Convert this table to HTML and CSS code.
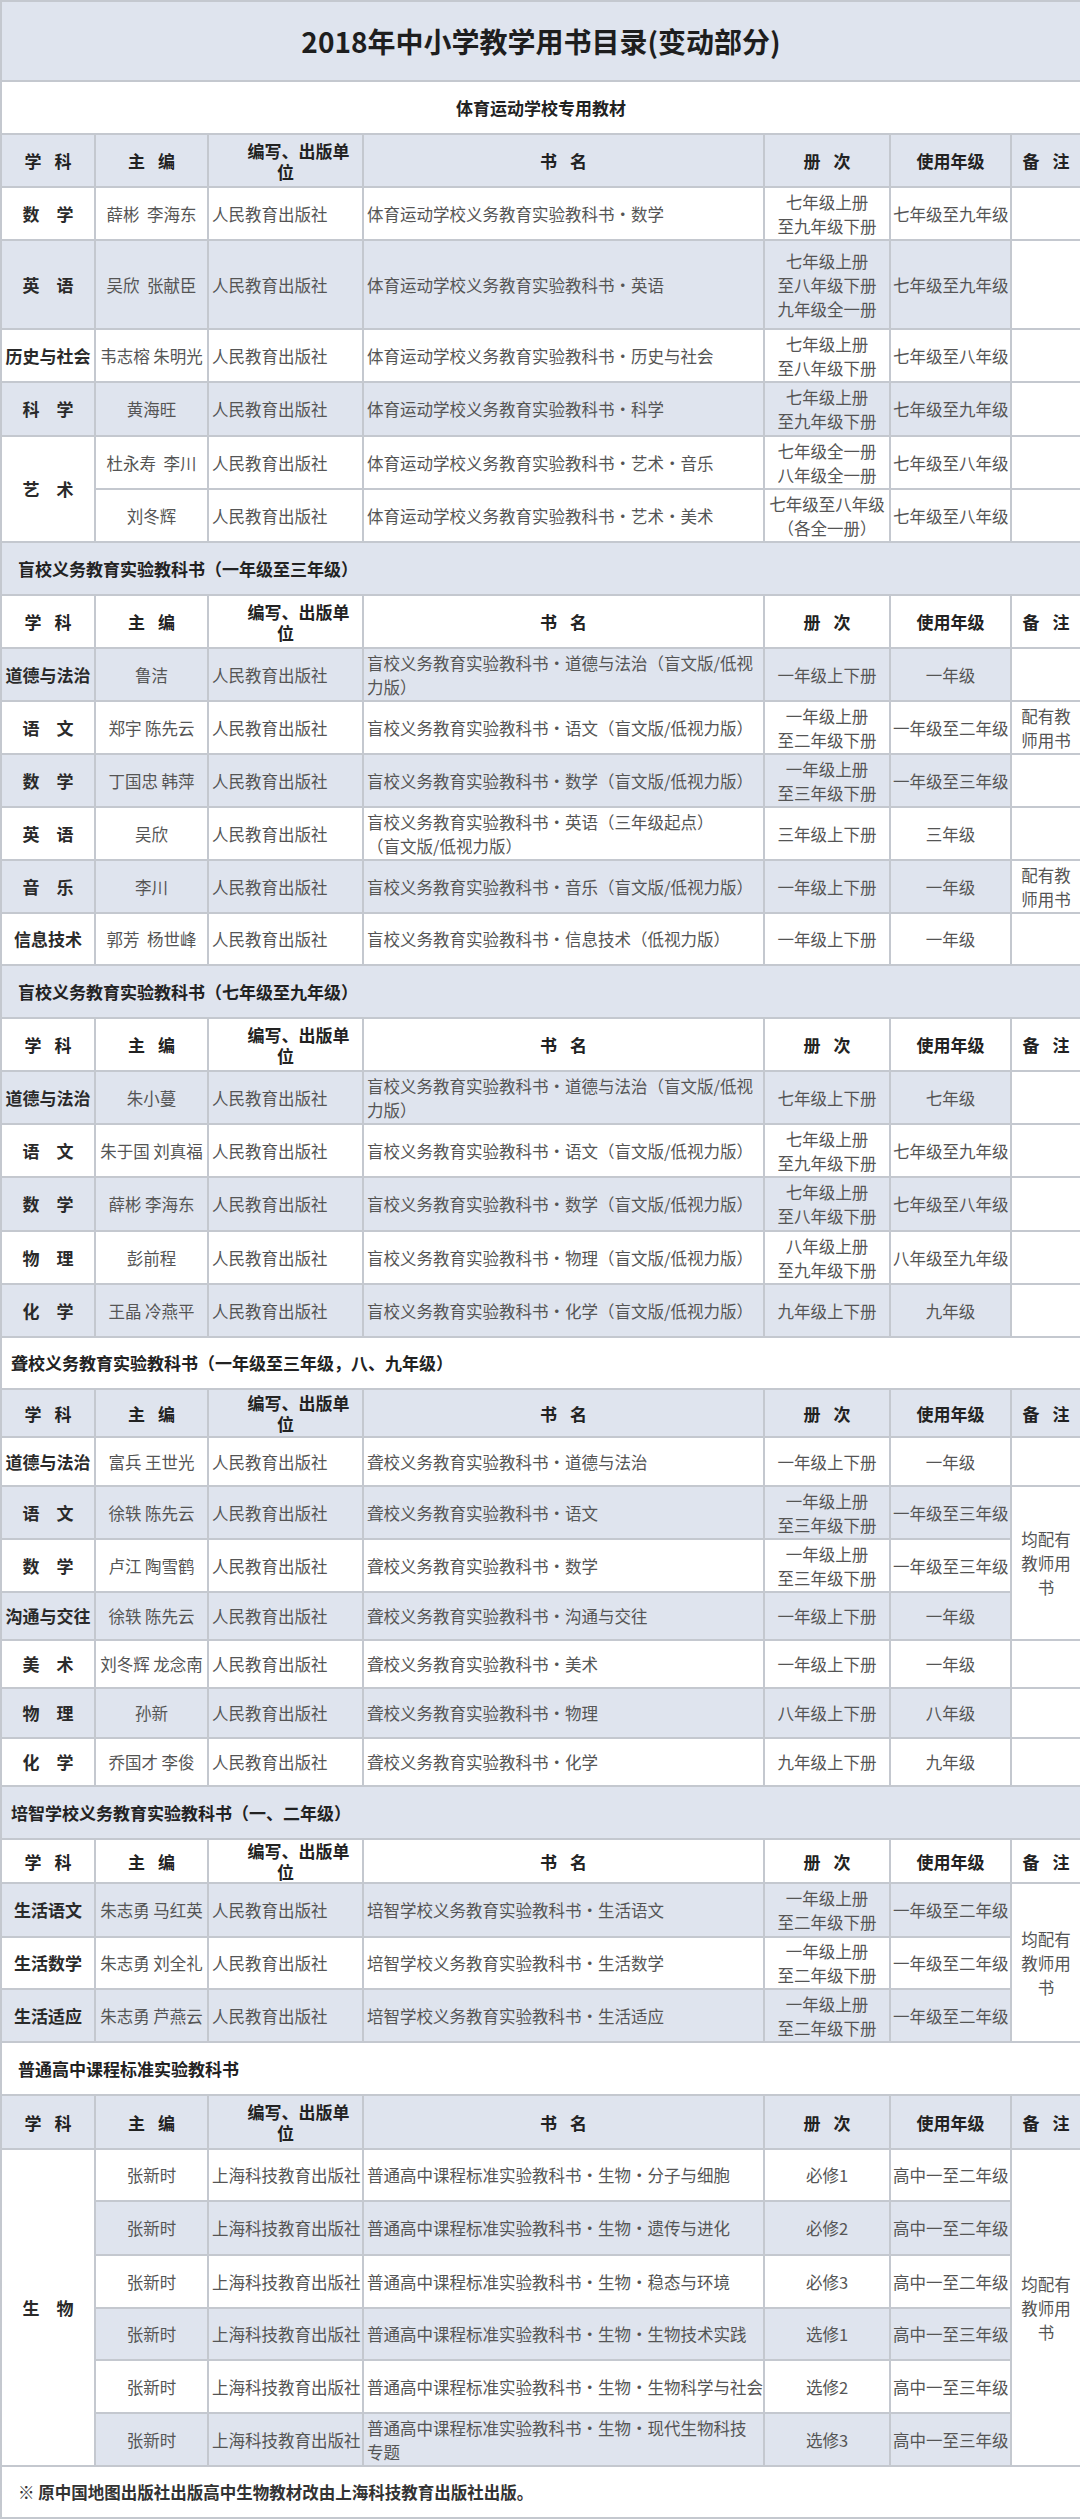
FILE: index.html
```html
<!DOCTYPE html>
<html lang="zh-CN">
<head>
<meta charset="utf-8">
<title>2018年中小学教学用书目录(变动部分)</title>
<link rel="stylesheet" href="styles.css">
</head>
<body>
<table class="book-table">
  <colgroup>
    <col class="c-subj"><col class="c-editor"><col class="c-pub"><col class="c-name"><col class="c-vol"><col class="c-grade"><col class="c-note">
  </colgroup>
  <tbody>
    <tr class="title-row"><td colspan="7" class="doc-title">2018年中小学教学用书目录(变动部分)</td></tr>

    <!-- Section 1 -->
    <tr class="sec"><td colspan="7" class="sec-title center">体育运动学校专用教材</td></tr>
    <tr class="hd gray"><td>学 科</td><td>主 编</td><td><span class="unit-l1">编写、出版单</span><br>位</td><td>书 名</td><td>册 次</td><td>使用年级</td><td>备 注</td></tr>
    <tr><td class="subj">数　学</td><td class="ed">薛彬&nbsp; 李海东</td><td class="pub">人民教育出版社</td><td class="nm">体育运动学校义务教育实验教科书・数学</td><td class="vol">七年级上册<br>至九年级下册</td><td class="gr">七年级至九年级</td><td class="note"></td></tr>
    <tr class="gray h89"><td class="subj">英　语</td><td class="ed">吴欣&nbsp; 张献臣</td><td class="pub">人民教育出版社</td><td class="nm">体育运动学校义务教育实验教科书・英语</td><td class="vol">七年级上册<br>至八年级下册<br>九年级全一册</td><td class="gr">七年级至九年级</td><td class="note"></td></tr>
    <tr><td class="subj">历史与社会</td><td class="ed">韦志榕 朱明光</td><td class="pub">人民教育出版社</td><td class="nm">体育运动学校义务教育实验教科书・历史与社会</td><td class="vol">七年级上册<br>至八年级下册</td><td class="gr">七年级至八年级</td><td class="note"></td></tr>
    <tr class="gray h54"><td class="subj">科　学</td><td class="ed">黄海旺</td><td class="pub">人民教育出版社</td><td class="nm">体育运动学校义务教育实验教科书・科学</td><td class="vol">七年级上册<br>至九年级下册</td><td class="gr">七年级至九年级</td><td class="note"></td></tr>
    <tr><td class="subj" rowspan="2">艺　术</td><td class="ed">杜永寿&nbsp; 李川</td><td class="pub">人民教育出版社</td><td class="nm">体育运动学校义务教育实验教科书・艺术・音乐</td><td class="vol">七年级全一册<br>八年级全一册</td><td class="gr">七年级至八年级</td><td class="note"></td></tr>
    <tr><td class="ed">刘冬辉</td><td class="pub">人民教育出版社</td><td class="nm">体育运动学校义务教育实验教科书・艺术・美术</td><td class="vol">七年级至八年级<br>（各全一册）</td><td class="gr">七年级至八年级</td><td class="note"></td></tr>

    <!-- Section 2 -->
    <tr class="sec gray"><td colspan="7" class="sec-title">盲校义务教育实验教科书（一年级至三年级）</td></tr>
    <tr class="hd"><td>学 科</td><td>主 编</td><td><span class="unit-l1">编写、出版单</span><br>位</td><td>书 名</td><td>册 次</td><td>使用年级</td><td>备 注</td></tr>
    <tr class="gray"><td class="subj">道德与法治</td><td class="ed">鲁洁</td><td class="pub">人民教育出版社</td><td class="nm">盲校义务教育实验教科书・道德与法治（盲文版/低视<br>力版）</td><td class="vol">一年级上下册</td><td class="gr">一年级</td><td class="note"></td></tr>
    <tr><td class="subj">语　文</td><td class="ed">郑宇 陈先云</td><td class="pub">人民教育出版社</td><td class="nm">盲校义务教育实验教科书・语文（盲文版/低视力版）</td><td class="vol">一年级上册<br>至二年级下册</td><td class="gr">一年级至二年级</td><td class="note">配有教师用书</td></tr>
    <tr class="gray"><td class="subj">数　学</td><td class="ed">丁国忠 韩萍</td><td class="pub">人民教育出版社</td><td class="nm">盲校义务教育实验教科书・数学（盲文版/低视力版）</td><td class="vol">一年级上册<br>至三年级下册</td><td class="gr">一年级至三年级</td><td class="note"></td></tr>
    <tr><td class="subj">英　语</td><td class="ed">吴欣</td><td class="pub">人民教育出版社</td><td class="nm">盲校义务教育实验教科书・英语（三年级起点）<br>（盲文版/低视力版）</td><td class="vol">三年级上下册</td><td class="gr">三年级</td><td class="note"></td></tr>
    <tr class="gray"><td class="subj">音　乐</td><td class="ed">李川</td><td class="pub">人民教育出版社</td><td class="nm">盲校义务教育实验教科书・音乐（盲文版/低视力版）</td><td class="vol">一年级上下册</td><td class="gr">一年级</td><td class="note">配有教师用书</td></tr>
    <tr class="h52"><td class="subj">信息技术</td><td class="ed">郭芳&nbsp; 杨世峰</td><td class="pub">人民教育出版社</td><td class="nm">盲校义务教育实验教科书・信息技术（低视力版）</td><td class="vol">一年级上下册</td><td class="gr">一年级</td><td class="note"></td></tr>

    <!-- Section 3 -->
    <tr class="sec gray"><td colspan="7" class="sec-title">盲校义务教育实验教科书（七年级至九年级）</td></tr>
    <tr class="hd"><td>学 科</td><td>主 编</td><td><span class="unit-l1">编写、出版单</span><br>位</td><td>书 名</td><td>册 次</td><td>使用年级</td><td>备 注</td></tr>
    <tr class="gray"><td class="subj">道德与法治</td><td class="ed">朱小蔓</td><td class="pub">人民教育出版社</td><td class="nm">盲校义务教育实验教科书・道德与法治（盲文版/低视<br>力版）</td><td class="vol">七年级上下册</td><td class="gr">七年级</td><td class="note"></td></tr>
    <tr><td class="subj">语　文</td><td class="ed">朱于国 刘真福</td><td class="pub">人民教育出版社</td><td class="nm">盲校义务教育实验教科书・语文（盲文版/低视力版）</td><td class="vol">七年级上册<br>至九年级下册</td><td class="gr">七年级至九年级</td><td class="note"></td></tr>
    <tr class="gray h54"><td class="subj">数　学</td><td class="ed">薛彬 李海东</td><td class="pub">人民教育出版社</td><td class="nm">盲校义务教育实验教科书・数学（盲文版/低视力版）</td><td class="vol">七年级上册<br>至八年级下册</td><td class="gr">七年级至八年级</td><td class="note"></td></tr>
    <tr><td class="subj">物　理</td><td class="ed">彭前程</td><td class="pub">人民教育出版社</td><td class="nm">盲校义务教育实验教科书・物理（盲文版/低视力版）</td><td class="vol">八年级上册<br>至九年级下册</td><td class="gr">八年级至九年级</td><td class="note"></td></tr>
    <tr class="gray"><td class="subj">化　学</td><td class="ed">王晶 冷燕平</td><td class="pub">人民教育出版社</td><td class="nm">盲校义务教育实验教科书・化学（盲文版/低视力版）</td><td class="vol">九年级上下册</td><td class="gr">九年级</td><td class="note"></td></tr>

    <!-- Section 4 -->
    <tr class="sec h52"><td colspan="7" class="sec-title tight">聋校义务教育实验教科书（一年级至三年级，八、九年级）</td></tr>
    <tr class="hd gray h48"><td>学 科</td><td>主 编</td><td><span class="unit-l1">编写、出版单</span><br>位</td><td>书 名</td><td>册 次</td><td>使用年级</td><td>备 注</td></tr>
    <tr class="h49"><td class="subj">道德与法治</td><td class="ed">富兵 王世光</td><td class="pub">人民教育出版社</td><td class="nm">聋校义务教育实验教科书・道德与法治</td><td class="vol">一年级上下册</td><td class="gr">一年级</td><td class="note"></td></tr>
    <tr class="gray"><td class="subj">语　文</td><td class="ed">徐轶 陈先云</td><td class="pub">人民教育出版社</td><td class="nm">聋校义务教育实验教科书・语文</td><td class="vol">一年级上册<br>至三年级下册</td><td class="gr">一年级至三年级</td><td class="note" rowspan="3">均配有教师用书</td></tr>
    <tr><td class="subj">数　学</td><td class="ed">卢江 陶雪鹤</td><td class="pub">人民教育出版社</td><td class="nm">聋校义务教育实验教科书・数学</td><td class="vol">一年级上册<br>至三年级下册</td><td class="gr">一年级至三年级</td></tr>
    <tr class="gray h48"><td class="subj">沟通与交往</td><td class="ed">徐轶 陈先云</td><td class="pub">人民教育出版社</td><td class="nm">聋校义务教育实验教科书・沟通与交往</td><td class="vol">一年级上下册</td><td class="gr">一年级</td></tr>
    <tr class="h48"><td class="subj">美　术</td><td class="ed">刘冬辉 龙念南</td><td class="pub">人民教育出版社</td><td class="nm">聋校义务教育实验教科书・美术</td><td class="vol">一年级上下册</td><td class="gr">一年级</td><td class="note"></td></tr>
    <tr class="gray h50"><td class="subj">物　理</td><td class="ed">孙新</td><td class="pub">人民教育出版社</td><td class="nm">聋校义务教育实验教科书・物理</td><td class="vol">八年级上下册</td><td class="gr">八年级</td><td class="note"></td></tr>
    <tr class="h48"><td class="subj">化　学</td><td class="ed">乔国才 李俊</td><td class="pub">人民教育出版社</td><td class="nm">聋校义务教育实验教科书・化学</td><td class="vol">九年级上下册</td><td class="gr">九年级</td><td class="note"></td></tr>

    <!-- Section 5 -->
    <tr class="sec gray"><td colspan="7" class="sec-title tight">培智学校义务教育实验教科书（一、二年级）</td></tr>
    <tr class="hd h43"><td>学 科</td><td>主 编</td><td><span class="unit-l1">编写、出版单</span><br>位</td><td>书 名</td><td>册 次</td><td>使用年级</td><td>备 注</td></tr>
    <tr class="gray h54"><td class="subj">生活语文</td><td class="ed">朱志勇 马红英</td><td class="pub">人民教育出版社</td><td class="nm">培智学校义务教育实验教科书・生活语文</td><td class="vol">一年级上册<br>至二年级下册</td><td class="gr">一年级至二年级</td><td class="note" rowspan="3">均配有教师用书</td></tr>
    <tr class="h52"><td class="subj">生活数学</td><td class="ed">朱志勇 刘全礼</td><td class="pub">人民教育出版社</td><td class="nm">培智学校义务教育实验教科书・生活数学</td><td class="vol">一年级上册<br>至二年级下册</td><td class="gr">一年级至二年级</td></tr>
    <tr class="gray"><td class="subj">生活适应</td><td class="ed">朱志勇 芦燕云</td><td class="pub">人民教育出版社</td><td class="nm">培智学校义务教育实验教科书・生活适应</td><td class="vol">一年级上册<br>至二年级下册</td><td class="gr">一年级至二年级</td></tr>

    <!-- Section 6 -->
    <tr class="sec"><td colspan="7" class="sec-title">普通高中课程标准实验教科书</td></tr>
    <tr class="hd gray h54"><td>学 科</td><td>主 编</td><td><span class="unit-l1">编写、出版单</span><br>位</td><td>书 名</td><td>册 次</td><td>使用年级</td><td>备 注</td></tr>
    <tr class="h52"><td class="subj" rowspan="6">生　物</td><td class="ed">张新时</td><td class="pub">上海科技教育出版社</td><td class="nm">普通高中课程标准实验教科书・生物・分子与细胞</td><td class="vol">必修1</td><td class="gr">高中一至二年级</td><td class="note" rowspan="6">均配有教师用书</td></tr>
    <tr class="gray h54"><td class="ed">张新时</td><td class="pub">上海科技教育出版社</td><td class="nm">普通高中课程标准实验教科书・生物・遗传与进化</td><td class="vol">必修2</td><td class="gr">高中一至二年级</td></tr>
    <tr><td class="ed">张新时</td><td class="pub">上海科技教育出版社</td><td class="nm">普通高中课程标准实验教科书・生物・稳态与环境</td><td class="vol">必修3</td><td class="gr">高中一至二年级</td></tr>
    <tr class="gray h52"><td class="ed">张新时</td><td class="pub">上海科技教育出版社</td><td class="nm">普通高中课程标准实验教科书・生物・生物技术实践</td><td class="vol">选修1</td><td class="gr">高中一至三年级</td></tr>
    <tr><td class="ed">张新时</td><td class="pub">上海科技教育出版社</td><td class="nm">普通高中课程标准实验教科书・生物・生物科学与社会</td><td class="vol">选修2</td><td class="gr">高中一至三年级</td></tr>
    <tr class="gray"><td class="ed">张新时</td><td class="pub">上海科技教育出版社</td><td class="nm">普通高中课程标准实验教科书・生物・现代生物科技<br>专题</td><td class="vol">选修3</td><td class="gr">高中一至三年级</td></tr>

    <tr class="foot h52"><td colspan="7" class="foot-note">※ 原中国地图出版社出版高中生物教材改由上海科技教育出版社出版。</td></tr>
  </tbody>
</table>
</body>
</html>
```

FILE: styles.css
```css
html, body {
  margin: 0;
  padding: 0;
  background: #ffffff;
}

body {
  font-family: "Noto Sans CJK SC", "Noto Sans", sans-serif;
  color: #555555;
}

.book-table {
  width: 1080px;
  table-layout: fixed;
  border-collapse: collapse;
  background: #ffffff;
}

.c-subj { width: 94px; }
.c-editor { width: 113px; }
.c-pub { width: 155px; }
.c-name { width: 401px; }
.c-vol { width: 126px; }
.c-grade { width: 121px; }
.c-note { width: 70px; }

.book-table td {
  border: 2px solid #c4c8cf;
  padding: 0 3px;
  font-size: 16.5px;
  line-height: 24px;
  vertical-align: middle;
  white-space: nowrap;
  overflow: hidden;
}

.book-table tr { height: 53px; }
.book-table tr.h43 { height: 43px; }
.book-table tr.h48 { height: 48px; }
.book-table tr.h49 { height: 49px; }
.book-table tr.h50 { height: 50px; }
.book-table tr.h52 { height: 52px; }
.book-table tr.h54 { height: 54px; }
.book-table tr.h89 { height: 89px; }
.book-table tr.title-row { height: 80px; }

.book-table .gray td { background: #dfe4ee; }
.book-table td.note {
  background: #ffffff;
  white-space: normal;
  text-align: center;
  padding: 0 7px;
  line-height: 24px;
}
.book-table td.subj[rowspan] { background: #ffffff; }

.book-table .doc-title {
  background: #dfe4ee;
  text-align: center;
  font-size: 28px;
  font-weight: 700;
  color: #1e1e1e;
}

.book-table .sec-title {
  font-size: 17px;
  font-weight: 700;
  color: #222222;
  padding-left: 16px;
}
.book-table .sec-title.center { text-align: center; padding-left: 3px; }
.book-table .sec-title.tight { padding-left: 9px; }

.book-table .hd td {
  text-align: center;
  font-size: 17px;
  font-weight: 700;
  color: #222222;
  line-height: 21px;
  word-spacing: 9px;
}
.unit-l1 { padding-left: 26px; word-spacing: 0; }

.book-table .subj {
  text-align: center;
  font-size: 17px;
  font-weight: 700;
  color: #2a2a2a;
  padding: 0 2px;
}

.book-table .ed { text-align: center; }
.book-table .pub { text-align: left; }
.book-table .nm { text-align: left; }
.book-table .vol { text-align: center; }
.book-table .gr { text-align: center; padding: 0 2px; }

.book-table .foot-note {
  text-align: left;
  padding-left: 16px;
  font-weight: 700;
  color: #333333;
  font-size: 16.5px;
}
```
